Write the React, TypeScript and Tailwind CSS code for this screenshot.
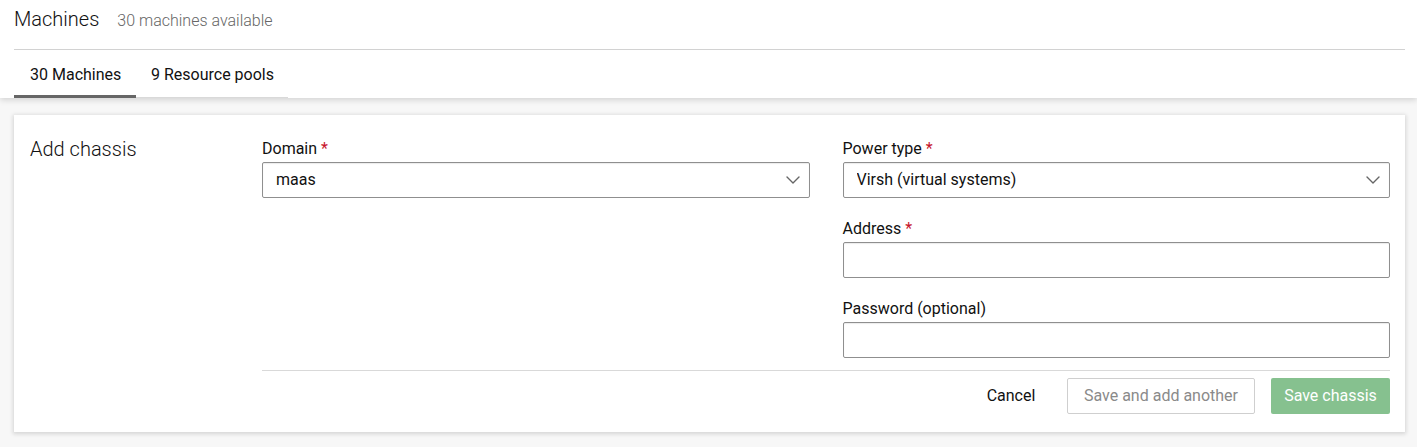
import { ChevronDown } from "lucide-react";

const font = { fontFamily: "Roboto, 'Open Sans', sans-serif" };

function Label({ text, required }: { text: string; required?: boolean }) {
  return (
    <label className="block text-[16px] leading-[24px] text-[#111] mb-px">
      {text}
      {required && <span className="text-[#c7162b] ml-1">*</span>}
    </label>
  );
}

function SelectField({ label, value }: { label: string; value: string }) {
  return (
    <div className="mb-[19px]">
      <Label text={label} required />
      <div className="relative">
        <select
          defaultValue={value}
          className="appearance-none w-full h-[36px] border border-[#8f8f8f] rounded-[2px] bg-white pl-[13px] pr-10 text-[16px] text-[#111] shadow-[inset_0_1px_1px_rgba(0,0,0,0.08)] outline-none"
          style={font}
        >
          <option>{value}</option>
        </select>
        <ChevronDown
          size={24}
          strokeWidth={1.4}
          className="absolute right-[5px] top-[6px] text-[#666] pointer-events-none"
        />
      </div>
    </div>
  );
}

function TextField({ label, required }: { label: string; required?: boolean }) {
  return (
    <div className="mb-[19px]">
      <Label text={label} required={required} />
      <input
        type="text"
        className="block w-full h-[36px] border border-[#8f8f8f] rounded-[2px] bg-white px-[13px] text-[16px] shadow-[inset_0_1px_1px_rgba(0,0,0,0.08)] outline-none"
        style={font}
      />
    </div>
  );
}

export default function App() {
  return (
    <div className="min-h-screen bg-[#f7f7f7] text-[#111]" style={font}>
      <header className="relative z-10 bg-white pl-[14px] pr-[12px] shadow-[0_2px_6px_0_rgba(0,0,0,0.15)]">
        <div className="h-[50px] border-b border-[#d2d2d2] pt-[7px] flex items-baseline gap-[18px]">
          <h1 className="text-[20px] leading-[24px] font-light text-[#111]">
            Machines
          </h1>
          <span className="text-[16px] leading-[24px] text-[#666] font-light">
            30 machines available
          </span>
        </div>
        <nav className="flex h-[48px]">
          <div className="w-[122px] pl-4 pt-[13px] border-b-[3px] border-[#666] text-[16px] leading-[24px]">
            30 Machines
          </div>
          <div className="w-[152px] pl-[15px] pt-[13px] border-b border-[#d9d9d9] text-[16px] leading-[24px] self-stretch">
            9 Resource pools
          </div>
        </nav>
      </header>

      <main className="pl-[14px] pr-[12px] pt-[17px] pb-4">
        <div className="bg-white shadow-[0_1px_4px_1px_rgba(17,17,17,0.15)] pl-4 pr-[15px] pt-[22px] pb-[18px] flex">
          <h2 className="w-[232px] shrink-0 text-[20px] leading-[24px] font-light">
            Add chassis
          </h2>
          <div className="flex-1">
            <div className="grid grid-cols-2 gap-x-[33px]">
              <div>
                <SelectField label="Domain" value="maas" />
              </div>
              <div>
                <SelectField label="Power type" value="Virsh (virtual systems)" />
                <TextField label="Address" required />
                <TextField label="Password (optional)" />
              </div>
            </div>
            <div className="-mt-[7px] border-t border-[#d9d9d9] pt-[7px] flex justify-end gap-4">
              <button className="w-[80px] h-[36px] text-[16px] text-[#111]">
                Cancel
              </button>
              <button
                disabled
                className="w-[188px] h-[36px] border border-[#cfcfcf] rounded-[2px] text-[16px] text-[#8a8a8a]"
              >
                Save and add another
              </button>
              <button
                disabled
                className="w-[119px] h-[36px] rounded-[2px] bg-[#86c18f] text-[16px] text-white"
              >
                Save chassis
              </button>
            </div>
          </div>
        </div>
      </main>
    </div>
  );
}
